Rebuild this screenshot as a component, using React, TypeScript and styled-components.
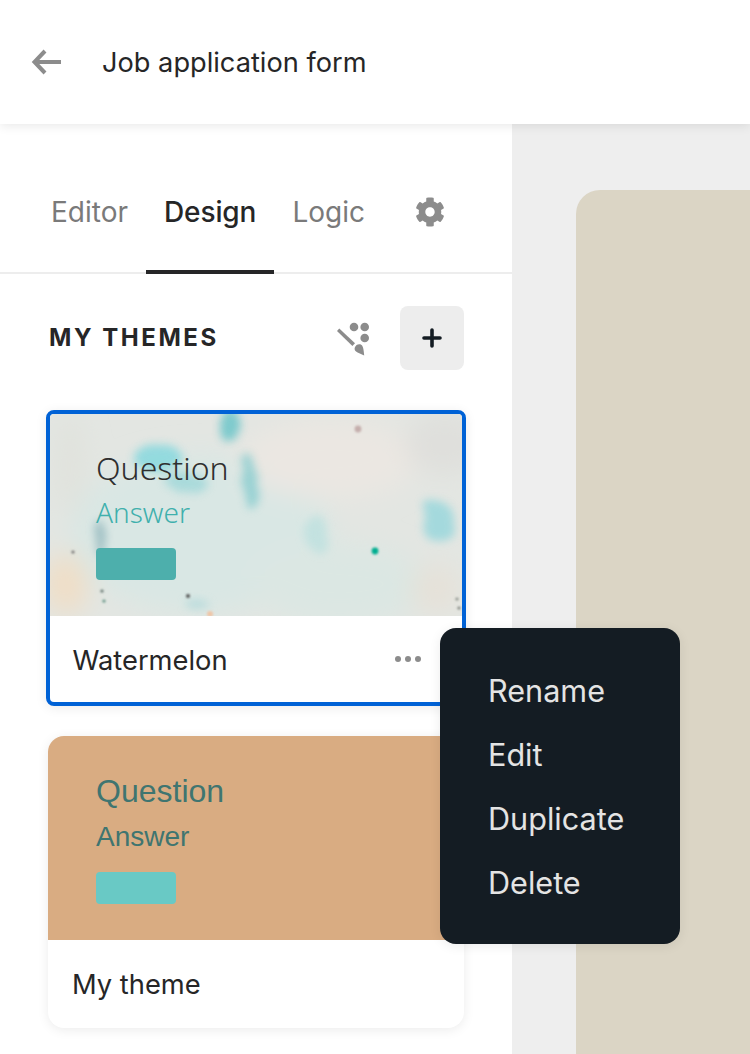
import React from "react";
import styled, { createGlobalStyle } from "styled-components";
import { FaCog } from "react-icons/fa";

const Global = createGlobalStyle`
  html, body { margin: 0; padding: 0; background: #fff; }
  * { box-sizing: border-box; }
  body { font-family: Inter, "Liberation Sans", sans-serif; color: #262627; -webkit-font-smoothing: antialiased; }
`;

const Page = styled.div`
  position: relative;
  width: 750px;
  height: 1054px;
  overflow: hidden;
  display: flex;
  flex-direction: column;
  background: #fff;
`;

const Header = styled.header`
  position: relative;
  z-index: 2;
  flex: none;
  height: 124px;
  display: flex;
  align-items: center;
  padding-left: 30px;
  gap: 40px;
  background: #fff;
  box-shadow: 0 2px 10px rgba(0, 0, 0, 0.09);
`;

const BackIcon = styled.svg`
  width: 32px;
  height: 28px;
  flex: none;
`;

const Title = styled.h1`
  margin: 2px 0 0;
  font-size: 27.2px;
  line-height: 36px;
  font-weight: 400;
  color: #262627;
`;

const Body = styled.div`
  flex: 1;
  min-height: 0;
  display: flex;
`;

const Sidebar = styled.aside`
  flex: none;
  width: 512px;
  background: #fff;
  display: flex;
  flex-direction: column;
`;

const Tabs = styled.nav`
  flex: none;
  height: 150px;
  padding: 0 0 0 33px;
  display: flex;
  border-bottom: 2px solid #ededed;
`;

const Tab = styled.div<{ $active?: boolean }>`
  height: 150px;
  padding: 30px 18px 0;
  display: flex;
  align-items: center;
  font-size: 28px;
  line-height: 36px;
  letter-spacing: ${(p) => (p.$active ? "-0.1px" : "0")};
  color: ${(p) => (p.$active ? "#262627" : "#7a7a7a")};
  font-weight: ${(p) => (p.$active ? 500 : 400)};
  border-bottom: 4px solid ${(p) => (p.$active ? "#262627" : "transparent")};
`;

const GearTab = styled(Tab)`
  padding-left: 32px;
  color: #8c8c8c;
  font-size: 30px;
`;

const Content = styled.div`
  flex: 1;
  padding: 32px 48px 0;
  display: flex;
  flex-direction: column;
`;

const SectionHead = styled.div`
  display: flex;
  align-items: center;
  height: 64px;
  margin-bottom: 40px;
`;

const SectionTitle = styled.h2`
  flex: 1;
  margin: 0;
  padding-left: 1px;
  font-size: 24px;
  line-height: 32px;
  font-weight: 700;
  letter-spacing: 2.55px;
  color: #262627;
`;

const BrushIcon = styled.svg`
  width: 36px;
  height: 36px;
  flex: none;
  margin-right: 28px;
`;

const AddButton = styled.div`
  width: 64px;
  height: 64px;
  border-radius: 8px;
  background: #ededed;
  display: flex;
  align-items: center;
  justify-content: center;
`;

const Card = styled.article<{ $selected?: boolean }>`
  width: ${(p) => (p.$selected ? "420px" : "416px")};
  margin: ${(p) => (p.$selected ? "0 0 30px -2px" : "0")};
  border-radius: ${(p) => (p.$selected ? "8px" : "16px")};
  border: ${(p) => (p.$selected ? "4px solid #0062d6" : "0")};
  background: #fff;
  overflow: hidden;
  flex: none;
  box-shadow: 0 2px 12px rgba(0, 0, 0, 0.08);
`;

const Preview = styled.div<{ $kind: "marble" | "sand" }>`
  position: relative;
  height: ${(p) => (p.$kind === "marble" ? "202px" : "204px")};
  padding: ${(p) => (p.$kind === "marble" ? "32px 0 0 46px" : "33px 0 0 48px")};
  display: flex;
  flex-direction: column;
  align-items: flex-start;
  overflow: hidden;
  background: ${(p) => (p.$kind === "sand" ? "#d9ac82" : "#e3e6e2")};
`;

const MarbleArt = styled.svg`
  position: absolute;
  inset: 0;
  width: 100%;
  height: 100%;
`;

const Question = styled.div<{ $kind: "marble" | "sand" }>`
  position: relative;
  font-family: ${(p) => (p.$kind === "marble" ? '"Noto Sans"' : '"Liberation Sans"')}, sans-serif;
  font-size: 32px;
  line-height: 44px;
  font-weight: ${(p) => (p.$kind === "marble" ? 300 : 400)};
  color: ${(p) => (p.$kind === "marble" ? "#2f2f2f" : "#3f7570")};
`;

const Answer = styled.div<{ $kind: "marble" | "sand" }>`
  position: relative;
  margin-top: ${(p) => (p.$kind === "marble" ? "4px" : "6px")};
  font-family: ${(p) => (p.$kind === "marble" ? '"Noto Sans"' : '"Liberation Sans"')}, sans-serif;
  font-size: 28px;
  line-height: 36px;
  font-weight: ${(p) => (p.$kind === "marble" ? 300 : 400)};
  color: ${(p) => (p.$kind === "marble" ? "#3fb0ad" : "#3f7570")};
`;

const Swatch = styled.div<{ $color: string; $gap: number }>`
  position: relative;
  width: 80px;
  height: 32px;
  margin-top: ${(p) => p.$gap}px;
  border-radius: 4px;
  background: ${(p) => p.$color};
`;

const CardFoot = styled.div<{ $selected?: boolean }>`
  height: ${(p) => (p.$selected ? "86px" : "88px")};
  display: flex;
  align-items: center;
  justify-content: space-between;
  padding: ${(p) => (p.$selected ? "3px 40px 0 22.5px" : "2px 24px 0 24px")};
  font-size: 27.3px;
  line-height: 36px;
  color: #262627;
`;

const DotsIcon = styled.svg`
  width: 28px;
  height: 8px;
  flex: none;
  margin-top: -3px;
`;

const Canvas = styled.main`
  flex: 1;
  background: #eeeeee;
  padding: 66px 0 0 64px;
  display: flex;
`;

const CanvasCard = styled.div`
  flex: 1;
  background: #dbd5c5;
  border-radius: 24px 0 0 0;
`;

const Menu = styled.ul`
  position: absolute;
  z-index: 3;
  left: 440px;
  top: 628px;
  width: 240px;
  height: 316px;
  margin: 0;
  padding: 30px 0 0 48px;
  list-style: none;
  background: #141c23;
  border-radius: 16px;
  box-shadow: 0 2px 12px rgba(0, 0, 0, 0.08);
`;

const MenuItem = styled.li`
  height: 64px;
  display: flex;
  align-items: center;
  font-size: 30.6px;
  color: #e4e4e4;
`;

const Marble = () => (
  <MarbleArt viewBox="0 0 412 202" preserveAspectRatio="none">
    <defs>
      <filter id="wob" x="-40%" y="-40%" width="180%" height="180%">
        <feTurbulence type="fractalNoise" baseFrequency="0.03" numOctaves="3" seed="7" />
        <feDisplacementMap in="SourceGraphic" scale="14" />
        <feGaussianBlur stdDeviation="4.5" />
      </filter>
      <filter id="soft" x="-50%" y="-50%" width="200%" height="200%">
        <feGaussianBlur stdDeviation="13" />
      </filter>
      <filter id="dot" x="-100%" y="-100%" width="300%" height="300%">
        <feGaussianBlur stdDeviation="0.8" />
      </filter>
    </defs>
    <g filter="url(#soft)">
      <ellipse cx="150" cy="120" rx="130" ry="80" fill="#d9e7e4" />
      <ellipse cx="290" cy="170" rx="90" ry="40" fill="#dbe7e3" />
      <ellipse cx="280" cy="45" rx="90" ry="40" fill="#ebe7e2" />
      <ellipse cx="395" cy="30" rx="40" ry="30" fill="#dfdfdc" />
      <ellipse cx="16" cy="170" rx="22" ry="30" fill="#f0dec6" />
      <ellipse cx="385" cy="175" rx="24" ry="24" fill="#e6e1d8" />
      <ellipse cx="20" cy="50" rx="14" ry="50" fill="#e0e2dc" />
    </g>
    <g filter="url(#wob)" opacity="0.62">
      <ellipse cx="180" cy="12" rx="11" ry="17" fill="#3fb9c0" />
      <ellipse cx="108" cy="44" rx="24" ry="14" fill="#66d3dc" />
      <ellipse cx="136" cy="68" rx="20" ry="10" fill="#8ed3d6" />
      <ellipse cx="200" cy="68" rx="8" ry="26" fill="#6fc5c9" />
      <ellipse cx="388" cy="108" rx="17" ry="20" fill="#7fd2da" />
      <ellipse cx="268" cy="120" rx="11" ry="18" fill="#b5dfde" />
      <ellipse cx="48" cy="122" rx="5" ry="18" fill="#7da8b0" />
      <ellipse cx="145" cy="188" rx="12" ry="5" fill="#a9d6d8" />
    </g>
    <g filter="url(#dot)">
      <circle cx="325" cy="137" r="3.4" fill="#00ad90" />
      <circle cx="308" cy="15" r="3.4" fill="#c4aeac" />
      <circle cx="23" cy="138" r="1.6" fill="#707070" />
      <circle cx="52" cy="177" r="1.6" fill="#5f6f6a" />
      <circle cx="54" cy="187" r="1.6" fill="#5f8f80" />
      <circle cx="138" cy="182" r="2" fill="#555" />
      <circle cx="407" cy="185" r="1.6" fill="#8a8f88" />
      <circle cx="409" cy="194" r="1.6" fill="#7a7f78" />
      <circle cx="160" cy="200" r="3" fill="#efc6a8" />
    </g>
  </MarbleArt>
);

export default function App() {
  return (
    <Page>
      <Global />
      <Header>
        <BackIcon viewBox="0 0 32 28" fill="none" stroke="#8c8c8c" strokeWidth="4">
          <path d="M31 14H5M15 3 4.5 14 15 25" />
        </BackIcon>
        <Title>Job application form</Title>
      </Header>
      <Body>
        <Sidebar>
          <Tabs>
            <Tab>Editor</Tab>
            <Tab $active>Design</Tab>
            <Tab>Logic</Tab>
            <GearTab><FaCog /></GearTab>
          </Tabs>
          <Content>
            <SectionHead>
              <SectionTitle>MY THEMES</SectionTitle>
              <BrushIcon viewBox="0 0 36 36" fill="#8c8c8c">
                <circle cx="18" cy="7" r="4.3" />
                <circle cx="28.7" cy="7" r="4.3" />
                <circle cx="28.7" cy="18" r="4.3" />
                <path d="M1 11 3.3 8.4 19 23.2l-2.6 2.9z" />
                <path d="M18.8 27.5c1-2.8 3.8-4 6-3 2 1 2.8 3.5 3.4 11l-6.6-3c-2.3-1-3.6-3-2.8-5z" />
              </BrushIcon>
              <AddButton>
                <svg width="20" height="20" viewBox="0 0 20 20" stroke="#141c23" strokeWidth="3.6" strokeLinecap="round" fill="none">
                  <path d="M10 2v16M2 10h16" />
                </svg>
              </AddButton>
            </SectionHead>
            <Card $selected>
              <Preview $kind="marble">
                <Marble />
                <Question $kind="marble">Question</Question>
                <Answer $kind="marble">Answer</Answer>
                <Swatch $color="#4dafac" $gap={18} />
              </Preview>
              <CardFoot $selected>
                Watermelon
                <DotsIcon viewBox="0 0 28 8" fill="#8c8c8c">
                  <circle cx="4" cy="4" r="3" />
                  <circle cx="14" cy="4" r="3" />
                  <circle cx="24" cy="4" r="3" />
                </DotsIcon>
              </CardFoot>
            </Card>
            <Card>
              <Preview $kind="sand">
                <Question $kind="sand">Question</Question>
                <Answer $kind="sand">Answer</Answer>
                <Swatch $color="#69c9c5" $gap={17} />
              </Preview>
              <CardFoot>My theme</CardFoot>
            </Card>
          </Content>
        </Sidebar>
        <Canvas>
          <CanvasCard />
        </Canvas>
      </Body>
      <Menu>
        <MenuItem>Rename</MenuItem>
        <MenuItem>Edit</MenuItem>
        <MenuItem>Duplicate</MenuItem>
        <MenuItem>Delete</MenuItem>
      </Menu>
    </Page>
  );
}
